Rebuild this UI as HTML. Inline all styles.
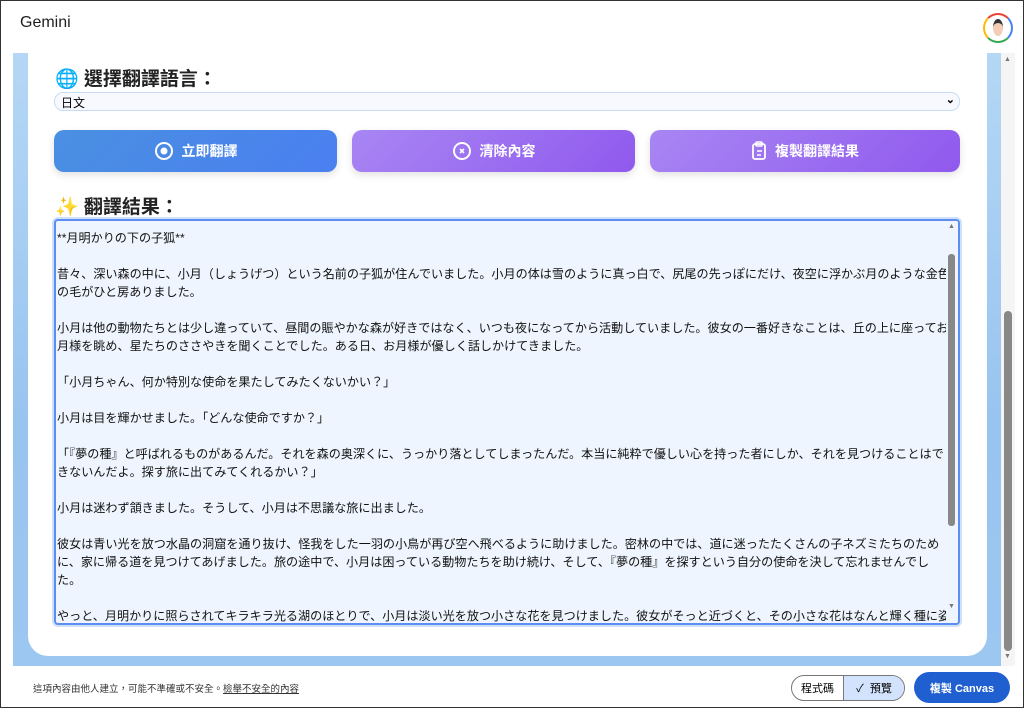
<!DOCTYPE html>
<html><head><meta charset="utf-8"><style>
*{box-sizing:border-box;margin:0;padding:0}
body{width:1024px;height:708px;overflow:hidden;background:#fff;font-family:"Liberation Sans","Noto Sans CJK TC",sans-serif;position:relative;border:1px solid #333}
.top{position:absolute;left:0;top:0;width:1022px;height:52px;background:#fff}
.logo{position:absolute;left:19px;top:13px;font-size:16px;color:#1f1f1f;font-family:"Liberation Sans",sans-serif}
.av{position:absolute;left:982px;top:12px;width:30px;height:30px;border-radius:50%;border:2px solid;border-color:#ea4335 #4285f4 #34a853 #fbbc05;background:#fff}
.av:after{content:"";position:absolute;left:8px;top:4px;width:10px;height:13px;border-radius:50%;background:#f3cdb8;border-top:4px solid #333}
.bg{position:absolute;left:12px;top:52px;width:988px;height:613px;background:linear-gradient(180deg,#b5d7f5,#98c4f0 60%,#9cc7f1);}
.sb{position:absolute;left:1000px;top:52px;width:14px;height:613px;background:#f5f5f5}
.sb .t{position:absolute;left:3px;top:258px;width:8px;height:340px;background:#888;border-radius:4px}
.h{position:absolute;left:54px;font-size:19px;font-weight:bold;color:#222;font-family:"Liberation Sans","Noto Sans CJK TC",sans-serif}
.sel{position:absolute;left:53px;top:91px;width:906px;height:19px;border:1.5px solid #c9dcf5;border-radius:9px;background:#f7f9fe;font-size:12px;padding:1px 6px;color:#000}
.sel span{position:absolute;right:4px;top:0;font-size:11px;font-weight:bold}
.btn{position:absolute;top:129px;height:42px;border-radius:10px;color:#fff;font-weight:bold;font-size:14px;display:flex;align-items:center;justify-content:center;gap:8px;box-shadow:0 3px 8px rgba(0,0,0,.12)}
.ta{position:absolute;left:53px;top:218px;width:906px;height:406px;border:2px solid #5b8ef0;border-radius:4px;background:#eef5fe;box-shadow:0 0 0 2px #cfe0fb;overflow:hidden;font-family:"Liberation Sans","Noto Sans CJK JP",sans-serif;font-size:12.1px;line-height:18px;color:#111;padding:8px 0 0 1px;white-space:pre}
.isb{position:absolute;right:0;top:0;width:12px;height:402px;background:#eef5fe}
.isb .t{position:absolute;left:2px;top:33px;width:7px;height:272px;background:#888;border-radius:3px}
.foot{position:absolute;left:32px;top:680px;font-size:9.5px;color:#333}
.tog{position:absolute;left:790px;top:674px;width:114px;height:26px;border:1px solid #777;border-radius:13px;overflow:hidden;font-size:11px;display:flex}
.tog div{display:flex;align-items:center;justify-content:center}
.cv{position:absolute;left:913px;top:671px;width:96px;height:31px;border-radius:16px;background:#1f5fcf;color:#fff;font-size:11px;font-weight:bold;display:flex;align-items:center;justify-content:center}
</style></head><body>
<div class="top"><div class="logo">Gemini</div><div class="av"></div></div>
<div class="bg"></div>
<div style="position:absolute;left:27px;top:30px;width:959px;height:625px;background:#fff;border-radius:20px"></div>
<div class="sb"><div style="position:absolute;left:3px;top:3px;font-size:7px;color:#777">▲</div><div class="t"></div><div style="position:absolute;left:3px;top:600px;font-size:7px;color:#777">▼</div></div>
<div class="h" style="top:63px">🌐 選擇翻譯語言：</div>
<div class="sel">日文<span>⌄</span></div>
<div class="btn" style="left:53px;width:283px;background:linear-gradient(135deg,#4a90e2,#4a7ff0)"><svg width="20" height="20" viewBox="0 0 20 20"><circle cx="10" cy="10" r="8" fill="none" stroke="#fff" stroke-width="2"/><circle cx="10" cy="10" r="3.5" fill="#fff"/></svg>立即翻譯</div>
<div class="btn" style="left:351px;width:283px;background:linear-gradient(135deg,#a886f3,#9059ee)"><svg width="20" height="20" viewBox="0 0 20 20"><circle cx="10" cy="10" r="8" fill="none" stroke="#fff" stroke-width="2"/><path d="M8 8l4 4M12 8l-4 4" stroke="#fff" stroke-width="1.6"/></svg>清除內容</div>
<div class="btn" style="left:649px;width:310px;background:linear-gradient(135deg,#a886f3,#9059ee)"><svg width="16" height="20" viewBox="0 0 16 20"><rect x="2" y="3" width="12" height="15" rx="2" fill="none" stroke="#fff" stroke-width="1.8"/><rect x="5" y="1" width="6" height="4" rx="1" fill="none" stroke="#fff" stroke-width="1.6"/><path d="M6 10h5M6 14h4" stroke="#fff" stroke-width="1.6"/></svg>複製翻譯結果</div>
<div class="h" style="top:191px">✨ 翻譯結果：</div>
<div class="ta">**月明かりの下の子狐**

昔々、深い森の中に、小月（しょうげつ）という名前の子狐が住んでいました。小月の体は雪のように真っ白で、尻尾の先っぽにだけ、夜空に浮かぶ月のような金色
の毛がひと房ありました。

小月は他の動物たちとは少し違っていて、昼間の賑やかな森が好きではなく、いつも夜になってから活動していました。彼女の一番好きなことは、丘の上に座ってお
月様を眺め、星たちのささやきを聞くことでした。ある日、お月様が優しく話しかけてきました。

「小月ちゃん、何か特別な使命を果たしてみたくないかい？」

小月は目を輝かせました。「どんな使命ですか？」

「『夢の種』と呼ばれるものがあるんだ。それを森の奥深くに、うっかり落としてしまったんだ。本当に純粋で優しい心を持った者にしか、それを見つけることはで
きないんだよ。探す旅に出てみてくれるかい？」

小月は迷わず頷きました。そうして、小月は不思議な旅に出ました。

彼女は青い光を放つ水晶の洞窟を通り抜け、怪我をした一羽の小鳥が再び空へ飛べるように助けました。密林の中では、道に迷ったたくさんの子ネズミたちのため
に、家に帰る道を見つけてあげました。旅の途中で、小月は困っている動物たちを助け続け、そして、『夢の種』を探すという自分の使命を決して忘れませんでし
た。

やっと、月明かりに照らされてキラキラ光る湖のほとりで、小月は淡い光を放つ小さな花を見つけました。彼女がそっと近づくと、その小さな花はなんと輝く種に姿<div class="isb"><div style="position:absolute;left:2px;top:2px;font-size:7px;color:#777;line-height:8px">▲</div><div class="t"></div><div style="position:absolute;left:2px;top:382px;font-size:7px;color:#777;line-height:8px">▼</div></div></div>
<div class="foot">這項內容由他人建立，可能不準確或不安全。<u>檢舉不安全的內容</u></div>
<div class="tog"><div style="width:52px">程式碼</div><div style="width:62px;background:#d3e3fd;border-left:1px solid #777">✓&nbsp;&nbsp;預覽</div></div>
<div class="cv">複製 Canvas</div>
</body></html>
